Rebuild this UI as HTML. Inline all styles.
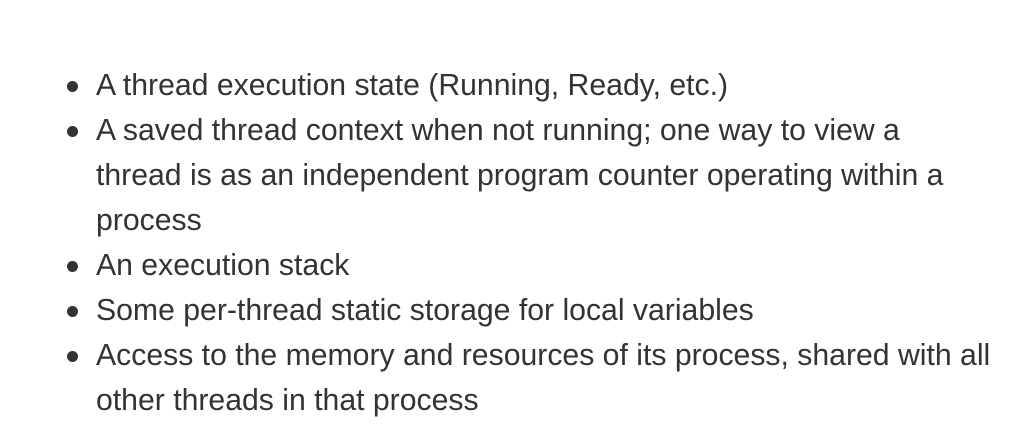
<!DOCTYPE html>
<html><head><style>
html,body{margin:0;padding:0;background:#fff;width:1033px;height:442px;overflow:hidden}
ul{position:absolute;left:96px;top:63px;margin:0;padding:0;list-style:none;font-family:"Liberation Sans",Arial,sans-serif;font-size:30.2px;line-height:45px;color:#333;white-space:nowrap}
li{margin:0;position:relative}
li:before{content:"";position:absolute;left:-29px;top:18px;width:11px;height:11px;border-radius:50%;background:#333}
</style></head><body>
<ul>
<li>A thread execution state (Running, Ready, etc.)</li>
<li>A saved thread context when not running; one way to view a<br>thread is as an independent program counter operating within a<br>process</li>
<li>An execution stack</li>
<li>Some per-thread static storage for local variables</li>
<li>Access to the memory and resources of its process, shared with all<br>other threads in that process</li>
</ul>
</body></html>
